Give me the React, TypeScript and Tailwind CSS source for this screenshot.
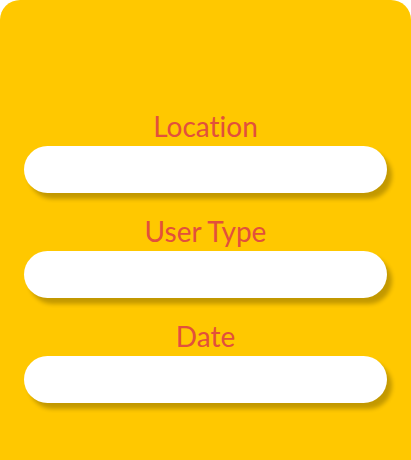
import React from "react";

const FIELDS = ["Location", "User Type", "Date"];

export default function App() {
  return (
    <div className="min-h-[460px] w-full bg-white">
      <div className="flex min-h-[460px] flex-col rounded-t-[20px] bg-[#ffc800] px-[24px] pt-[112px] font-['Lato',sans-serif]">
        {FIELDS.map((f) => (
          <div key={f} className="mb-[24px] flex flex-col">
            <label className="text-center text-[28px] leading-[28px] text-[#e2503c] [font-variant-ligatures:none]">
              {f}
            </label>
            <input
              type="text"
              className="mt-[6px] h-[47px] w-full rounded-full bg-white px-5 outline-none shadow-[5px_6px_4px_rgba(0,0,0,0.24)]"
            />
          </div>
        ))}
      </div>
    </div>
  );
}
